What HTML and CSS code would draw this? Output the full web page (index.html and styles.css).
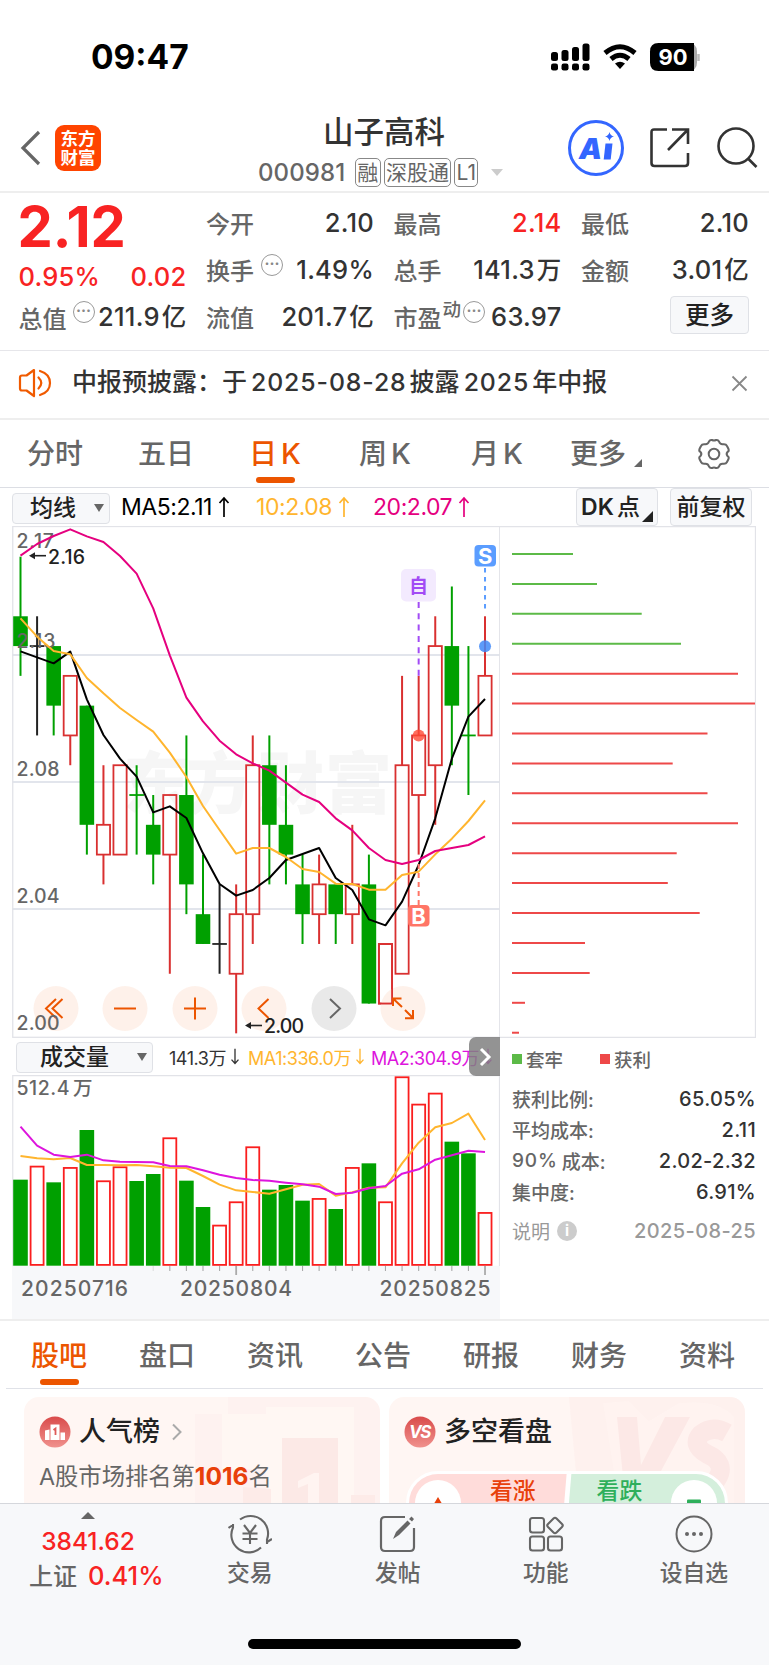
FILE: index.html
```html
<!DOCTYPE html>
<html lang="zh-CN">
<head>
<meta charset="UTF-8">
<meta name="viewport" content="width=device-width, initial-scale=1">
<title>山子高科 000981</title>
<link rel="stylesheet" href="styles.css">
</head>
<body>
<div class="phone">

  <div class="status-bar">
    <span class="clock">09:47</span>
    <svg class="status-icons" width="150" height="30" viewBox="0 0 150 30">
      <g>
        <rect x="1" y="10" width="7" height="9" rx="2.500"/><rect x="11.500" y="8" width="7" height="11" rx="2.500"/><rect x="22" y="5" width="7" height="14" rx="2.500"/><rect x="32.500" y="1.500" width="7" height="17.500" rx="2.500"/>
        <rect x="1" y="21.500" width="7" height="7" rx="2.200"/><rect x="11.500" y="21.500" width="7" height="7" rx="2.200"/><rect x="22" y="21.500" width="7" height="7" rx="2.200"/><rect x="32.500" y="21.500" width="7" height="7" rx="2.200"/>
      </g>
      <g fill="none" stroke="#000" stroke-width="5">
        <path d="M55 11 Q70 -1.500 85 11"/>
        <path d="M61 17 Q70 9.500 79 17"/>
      </g>
      <path d="M65 21.500 Q70 18 75 21.500 L70 27Z"/>
      <path d="M138 1 q9 0 9 8.500 v11 q0 8.500 -9 8.500z" fill="#aaa"/>
      <path d="M108.500 1 H144 V29 H108.500 Q100 29 100 20.500 V9.500 Q100 1 108.500 1Z"/>
      <path d="M148.500 12 v7" stroke="#bbb" stroke-width="2.500"/>
      <text x="123" y="23" class="battery-text" text-anchor="middle">90</text>
    </svg>
  </div>

  <div class="nav">
    <div class="nav-left">
      <svg width="22" height="36" viewBox="0 0 22 36"><path d="M19 2 L3 18 L19 34" fill="none" stroke="#666" stroke-width="3.200"/></svg>
      <div class="app-logo"><span>东方</span><span>财富</span></div>
    </div>
    <div class="nav-title">
      <h1>山子高科</h1>
      <div class="nav-sub">
        <span class="code">000981</span><span class="tag">融</span><span class="tag">深股通</span><span class="tag">L1</span><i class="caret-light"></i>
      </div>
    </div>
    <div class="nav-right">
      <svg width="58" height="58" viewBox="0 0 58 58">
        <circle cx="29" cy="29" r="26.500" fill="#fff" stroke="#3366ff" stroke-width="3"/>
        <text x="12" y="40" class="ai-text">A</text>
        <path d="M38.500 24.500 h7 l-1.800 16 h-7z" fill="#3366ff"/>
        <path d="M42.500 13 q.8 3.700 4.500 4.500 q-3.700 .8 -4.500 4.500 q-.8 -3.700 -4.500 -4.500 q3.700 -.8 4.500 -4.500z" fill="#3366ff"/>
      </svg>
      <svg width="42" height="42" viewBox="0 0 42 42" fill="none" stroke="#333" stroke-width="2.600">
        <path d="M18 2.500 H5 Q2.500 2.500 2.500 5 V36 Q2.500 39 5.500 39 H36 Q39 39 39 36 V26"/>
        <path d="M23 2.500 H39 V17 M39 2.500 L19 23"/>
      </svg>
      <svg width="44" height="42" viewBox="0 0 44 42" fill="none" stroke="#333" stroke-width="2.600">
        <circle cx="21" cy="19" r="17.500"/><path d="M33 31.500 L41.500 40"/>
      </svg>
    </div>
  </div>

  <div class="quote">
    <div class="quote-col first">
      <div class="price">2.12</div>
      <div class="row red"><b>0.95%</b><b>0.02</b></div>
      <div class="row"><span>总值<i class="dots">···</i></span><b>211.9<em>亿</em></b></div>
    </div>
    <div class="quote-col">
      <div class="row"><span>今开</span><b>2.10</b></div>
      <div class="row"><span>换手<i class="dots far">···</i></span><b>1.49%</b></div>
      <div class="row"><span>流值</span><b>201.7<em>亿</em></b></div>
    </div>
    <div class="quote-col">
      <div class="row"><span>最高</span><b class="red">2.14</b></div>
      <div class="row"><span>总手</span><b>141.3<em>万</em></b></div>
      <div class="row"><span>市盈<sup>动</sup><i class="dots near">···</i></span><b>63.97</b></div>
    </div>
    <div class="quote-col">
      <div class="row"><span>最低</span><b>2.10</b></div>
      <div class="row"><span>金额</span><b>3.01<em>亿</em></b></div>
      <div class="row end"><button class="more-btn">更多</button></div>
    </div>
  </div>

  <div class="notice">
    <svg width="34" height="30" viewBox="0 0 34 30" fill="none" stroke="#f05a00" stroke-width="2.200" stroke-linejoin="round">
      <path d="M16 2 L8.500 7.500 H4 Q2 7.500 2 9.500 V20.500 Q2 22.500 4 22.500 H8.500 L16 28Z"/>
      <path d="M20.500 9.500 Q26 15 20.500 20.500 M22 3 Q32 6 32 15 Q32 24 22 27" stroke-linecap="round"/>
    </svg>
    <p>中报预披露：于<span class="num">2025-08-28</span>披露<span class="num">2025</span>年中报</p>
    <svg width="17" height="17" viewBox="0 0 17 17"><path d="M1.500 1.500 L15.500 15.500 M15.500 1.500 L1.500 15.500" stroke="#888" stroke-width="1.800"/></svg>
  </div>

  <div class="period-tabs">
    <a>分时</a>
    <a>五日</a>
    <a class="active">日<span>K</span></a>
    <a class="week">周<span>K</span></a>
    <a class="month">月<span>K</span></a>
    <a class="with-corner">更多<i class="corner"></i></a>
    <svg width="34" height="34" viewBox="0 0 34 34" fill="none" stroke="#666" stroke-width="2">
      <path d="M12 4.500 Q13 2.500 15 3 Q17 4 19 3 Q21 2.500 22 4.500 Q23 7.500 26 7.200 Q29 6.800 30 9 L31.500 12 Q32.300 14 30.500 15 Q28.800 17 30.500 19 Q32.300 20 31.500 22 L30 25 Q29 27.200 26 26.800 Q23 26.500 22 29.500 Q21 31.500 19 31 Q17 30 15 31 Q13 31.500 12 29.500 Q11 26.500 8 26.800 Q5 27.200 4 25 L2.500 22 Q1.700 20 3.500 19 Q5.200 17 3.500 15 Q1.700 14 2.500 12 L4 9 Q5 6.800 8 7.200 Q11 7.500 12 4.500Z"/>
      <circle cx="17" cy="17" r="5.300"/>
    </svg>
  </div>

  <div class="ma-bar">
    <button class="select ma-select">均线<i class="caret"></i></button>
    <span class="ma ma5">MA5:2.11<svg class="arrow" viewBox="0 0 12 22"><path d="M6 21 V2 M1.500 7 L6 2 L10.500 7"/></svg></span>
    <span class="ma ma10">10:2.08<svg class="arrow" viewBox="0 0 12 22"><path d="M6 21 V2 M1.500 7 L6 2 L10.500 7"/></svg></span>
    <span class="ma ma20">20:2.07<svg class="arrow" viewBox="0 0 12 22"><path d="M6 21 V2 M1.500 7 L6 2 L10.500 7"/></svg></span>
    <button class="box dk">DK<span>点</span><i class="corner dark"></i></button>
    <button class="box">前复权</button>
  </div>

  <div class="charts">
    <div class="chart-left">
      <svg id="kline" width="488" height="512" viewBox="12 526 488 512"></svg>
      <div class="vol-bar">
        <button class="select vol-select">成交量<i class="caret"></i></button>
        <span class="v0">141.3万<svg class="arrow small" viewBox="0 0 12 22"><path d="M6 1 V20 M1.500 15 L6 20 L10.500 15"/></svg></span>
        <span class="v1">MA1:336.0万<svg class="arrow small" viewBox="0 0 12 22"><path d="M6 1 V20 M1.500 15 L6 20 L10.500 15"/></svg></span>
        <span class="v2">MA2:304.9万<svg class="arrow small" viewBox="0 0 12 22"><path d="M6 1 V20 M1.500 15 L6 20 L10.500 15"/></svg></span>
        <div class="vol-next"><svg width="14" height="20" viewBox="0 0 14 20"><path d="M3 2 L11 10 L3 18" fill="none" stroke="#fff" stroke-width="3"/></svg></div>
      </div>
      <svg id="volume" width="488" height="244" viewBox="12 1075 488 244"></svg>
    </div>
    <div class="chart-right">
      <svg id="chips" width="256" height="512" viewBox="500 526 256 512"></svg>
      <div class="legend"><i class="sq green"></i><span>套牢</span><i class="sq redsq"></i><span>获利</span></div>
      <div class="stat"><span>获利比例:</span><b>65.05%</b></div>
      <div class="stat"><span>平均成本:</span><b>2.11</b></div>
      <div class="stat"><span><u>90%</u>成本:</span><b>2.02-2.32</b></div>
      <div class="stat"><span>集中度:</span><b>6.91%</b></div>
      <div class="stat muted"><span>说明<i class="info">i</i></span><b>2025-08-25</b></div>
    </div>
  </div>

  <div class="info-tabs">
    <a class="active">股吧</a><a>盘口</a><a>资讯</a><a>公告</a><a>研报</a><a>财务</a><a>资料</a>
  </div>

  <div class="feed">
    <div class="card">
      <svg class="card-bg" width="356" height="107" viewBox="0 0 356 107">
        <path d="M171 17 H204 V0 H356 V107 H171Z" fill="#feefec" opacity=".55"/>
        <path d="M198 72 V17 H242 V10 H330 V107 H242 V72Z" fill="#fff7f4" opacity=".8"/>
        <path d="M258 41 H314 V107 H258Z" fill="#fce9e6"/><path d="M219 90 L247 92 V107 H219Z M327 98 H351 V107 H327Z" fill="#fdebe8"/>
        <path d="M274 84 L290 76 H295 V107 H284 V87 L274 91Z" fill="#fff4f1"/>
      </svg>
      <div class="card-head">
        <svg width="32" height="32" viewBox="0 0 32 32">
          <defs><linearGradient id="badge" x1="0" y1="0" x2="0" y2="1"><stop offset="0" stop-color="#d94b4b"/><stop offset="1" stop-color="#f0918d"/></linearGradient></defs>
          <circle cx="16" cy="16" r="15.500" fill="url(#badge)"/>
          <path d="M6 24 V14.500 L10.500 13.500 V24Z M11.500 24 V8.500 H20.500 V24Z M21.500 24 V16.500 H26 V24Z" fill="#fff"/>
          <path d="M14.500 14 L16.500 12.500 V19" fill="none" stroke="#de5b59" stroke-width="1.800"/>
        </svg>
        <h2>人气榜</h2>
        <svg class="chev" width="12" height="18" viewBox="0 0 12 18"><path d="M2 1.500 L9.500 9 L2 16.500" fill="none" stroke="#aaa" stroke-width="2"/></svg>
      </div>
      <p class="rank">A股市场排名第<b>1016</b>名</p>
    </div>
    <div class="card">
      <svg class="card-bg" width="356" height="107" viewBox="0 0 356 107">
        <path d="M180 0 H340 Q356 0 356 16 V107 H190Z" fill="#feefec" opacity=".75"/>
        <path d="M214 6 L240 4 L260 24 L290 6 Q330 2 345 20 V107 H230Z" fill="#fff4f1" opacity=".65"/>
        <path d="M228 20 H248 L252 68 L276 20 H301 L258 100 H236Z" fill="#fce8e6"/>
        <path d="M338 36 Q324 28 312 37 Q302 48 318 57 Q338 66 328 82 Q318 96 294 88" fill="none" stroke="#fce8e6" stroke-width="19"/>
      </svg>
      <div class="card-head">
        <svg width="32" height="32" viewBox="0 0 32 32"><circle cx="16" cy="16" r="15.500" fill="url(#badge)"/><text x="15.500" y="22" text-anchor="middle" class="vs">VS</text></svg>
        <h2>多空看盘</h2>
      </div>
      <div class="vote">
        <div class="vote-up"><i><svg width="14" height="10" viewBox="0 0 14 10"><path d="M7 0 L13 10 H1Z" fill="#e8400a"/></svg></i>看涨</div>
        <div class="vote-down">看跌<i><svg width="14" height="10" viewBox="0 0 14 10"><rect y="2.500" width="14" height="5" rx="1" fill="#2eaf5b"/></svg></i></div>
      </div>
    </div>
  </div>

  <div class="bottom-bar">
    <div class="index">
      <i class="up-caret"></i>
      <b>3841.62</b>
      <div>上证<b>0.41%</b></div>
    </div>
    <div class="tool">
      <svg width="44" height="40" viewBox="0 0 44 40" fill="none" stroke="#666" stroke-width="2.100">
        <path d="M12 5.500 A17.500 17.500 0 0 1 39 25.500 V30 M39 28 L44 25 M33 33.500 A17.500 17.500 0 0 1 5 13.500 V10 M5 11 L0.500 14"/>
        <path d="M16 11 L22 19 L28 11 M22 19 V30 M14.500 19.500 H29.500 M14.500 25 H29.500"/>
      </svg>
      <span>交易</span>
    </div>
    <div class="tool">
      <svg width="44" height="40" viewBox="0 0 44 40" fill="none" stroke="#666" stroke-width="2.200">
        <path d="M29 3 H9 Q5 3 5 7 V33 Q5 37 9 37 H34 Q38 37 38 33 V14"/>
        <path d="M17 25 L20 18 L31.500 6.500 L34.500 9.500 L23 21Z M33 5 L35.500 2.500 L38 5 L36 7.500Z" fill="#666" stroke="none"/>
      </svg>
      <span>发帖</span>
    </div>
    <div class="tool">
      <svg width="44" height="40" viewBox="0 0 44 40" fill="none" stroke="#666" stroke-width="2.100">
        <rect x="6" y="4" width="14" height="14.500" rx="2.500"/><rect x="6" y="22.500" width="14" height="14" rx="2.500"/><rect x="24" y="22.500" width="14" height="14" rx="2.500"/>
        <path d="M29.500 4.500 Q31 3 32.500 4.500 L38 10 Q39.500 11.500 38 13 L32.500 18.500 Q31 20 29.500 18.500 L24 13 Q22.500 11.500 24 10Z"/>
      </svg>
      <span>功能</span>
    </div>
    <div class="tool">
      <svg width="44" height="40" viewBox="0 0 44 40">
        <circle cx="22" cy="20" r="17.500" fill="none" stroke="#666" stroke-width="2"/>
        <g fill="#666"><circle cx="15" cy="20" r="2"/><circle cx="22" cy="20" r="2"/><circle cx="29" cy="20" r="2"/></g>
      </svg>
      <span>设自选</span>
    </div>
    <div class="home-line"></div>
  </div>

</div>
<script src="script.js"></script>
</body>
</html>
```
FILE: styles.css
```css
* {
  box-sizing: border-box;
}
body {
  margin: 0;
  background: #fff;
  color: #333;
  font-family: Inter, "Noto Sans CJK SC", sans-serif;
}
h1, h2, p {
  margin: 0;
  font-weight: 500;
}
b { font-weight: 500; }
i, em { font-style: normal; }
button {
  font-family: inherit;
  color: #222;
  padding: 0;
  background: #f7f8fa;
  border: 1.5px solid #dfe1e6;
  border-radius: 4px;
  line-height: 1;
}
svg { display: block; flex: none; }
.red { color: #f82323; }
.phone {
  width: 769px;
  height: 1665px;
  overflow: hidden;
  display: flex;
  flex-direction: column;
}
.phone > div { flex: none; }

/* status bar + nav */
.status-bar {
  height: 104px;
  padding: 42px 69px 0 91px;
  display: flex;
  justify-content: space-between;
}
.clock {
  font-size: 33.5px;
  font-weight: 700;
  line-height: 31px;
  color: #000;
}
.battery-text {
  font: 700 22px Inter, sans-serif;
  fill: #fff;
}
.nav {
  height: 89px;
  border-bottom: 2px solid #eee;
  display: flex;
  padding: 0 10px 0 20px;
}
.nav-left {
  display: flex;
  align-items: center;
  gap: 13px;
  width: 230px;
}
.app-logo {
  width: 46px;
  height: 46px;
  border-radius: 9px;
  background: #ff4400;
  color: #fff;
  font: 700 17.5px/20px "Noto Sans CJK SC", sans-serif;
  text-align: center;
  padding-top: 3px;
}
.app-logo span {
  display: block;
  height: 19px;
  line-height: 19px;
}
.nav-title {
  width: 270px;
  padding-top: 9px;
}
.nav-title h1 {
  font-size: 30.5px;
  line-height: 38px;
  padding-left: 73px;
  white-space: nowrap;
}
.nav-sub {
  display: flex;
  align-items: center;
  padding-left: 8px;
  margin-top: 7px;
  color: #666;
}
.code {
  font-size: 24px;
  font-weight: 500;
  letter-spacing: 0.1px;
  width: 97px;
}
.tag {
  font-size: 21px;
  line-height: 27px;
  height: 29px;
  border: 1.5px solid #888;
  border-radius: 5px;
  margin-right: 3px;
  padding: 0 1.3px;
  flex: none;
}
.caret-light {
  border: 6.5px solid transparent;
  border-top: 7px solid #ccc;
  border-bottom: 0;
  margin-left: 10px;
  flex: none;
}
.nav-right {
  display: flex;
  align-items: center;
  gap: 24px;
  margin: 1px 0 0 auto;
}
.ai-text {
  font: italic 900 29px Inter, sans-serif;
  fill: #3366ff;
}

/* quote */
.quote {
  height: 158px;
  border-bottom: 1.5px solid #e6e6ea;
  display: grid;
  grid-template-columns: repeat(4, 168px);
  column-gap: 19.5px;
  padding: 6px 0 0 18.5px;
}
.row {
  height: 47px;
  display: flex;
  align-items: center;
  justify-content: space-between;
  white-space: nowrap;
}
.row span {
  font-size: 24px;
  font-weight: 500;
  color: #666;
  display: flex;
  align-items: center;
}
.row b {
  font-size: 25.5px;
  line-height: 30px;
  letter-spacing: 0.25px;
}
.row em { margin-left: 2px; font-size: 24.5px; }
.row.end { justify-content: flex-end; }
.price {
  font-size: 56px;
  font-weight: 700;
  color: #f82323;
  line-height: 56px;
  height: 52px;
  margin-left: -1px;
}
.first .row.red { height: 52px; }
.first .row:last-child { height: 28px; }
.dots {
  width: 22px;
  height: 22px;
  border: 1.5px solid #999;
  border-radius: 50%;
  color: #888;
  font-size: 15px;
  font-weight: 700;
  line-height: 18px;
  text-align: center;
  margin: -10px 0 0 6px;
}
.far { margin-left: 7px; }
.near { margin-left: 2px; }
.row sup {
  font-size: 18.5px;
  line-height: 18px;
  margin: -16px 0 0 1px;
}
.more-btn {
  width: 79px;
  height: 38px;
  font-size: 24.5px;
  font-weight: 500;
  margin-top: -3px;
}

/* notice */
.notice {
  height: 69px;
  border-bottom: 2px solid #eee;
  display: flex;
  align-items: center;
  padding: 0 21px 3px 18px;
}
.notice p {
  flex: 1;
  font-size: 25px;
  line-height: 34px;
  margin-top: -2px;
  padding-left: 20px;
}
.num { margin: 0 3px 0 4px; letter-spacing: 0.9px; font-size: 24.8px; }

/* period tabs */
.period-tabs {
  height: 68px;
  border-bottom: 1.5px solid #dcdee4;
  display: flex;
  align-items: center;
  padding: 0 38px 0 27px;
  justify-content: space-between;
  font-size: 28px;
  font-weight: 500;
  color: #666;
}
.period-tabs a {
  position: relative;
  line-height: 66px;
}
.period-tabs span { margin-left: 4px; font-size: 29px; }
.week { margin: 0 -3px 0 3px; }
.month { margin: 0 -8px 0 8px; }
.period-tabs .active, .info-tabs .active { color: #ec5500; }
.active::after {
  content: "";
  position: absolute;
  left: 50%;
  bottom: 4px;
  width: 39px;
  height: 6px;
  margin-left: -19px;
  border-radius: 3px;
  background: #ec5500;
}
.with-corner { padding-right: 16px; }
.corner {
  position: absolute;
  right: 0;
  bottom: 20px;
  border-left: 8px solid transparent;
  border-bottom: 8px solid #666;
}
.corner.dark {
  right: 4px;
  bottom: 3px;
  border-left-width: 11px;
  border-bottom: 11px solid #222;
}

/* indicator bar */
.ma-bar {
  height: 38px;
  display: flex;
  align-items: center;
  padding: 0 16px 0 12px;
}
.select {
  display: flex;
  align-items: center;
  justify-content: space-between;
  font-weight: 500;
}
.caret {
  border: 5px solid transparent;
  border-top: 8px solid #666;
  border-bottom: 0;
}
.ma-select {
  width: 98px;
  height: 31px;
  margin-top: 2px;
  font-size: 23px;
  padding: 0 5px 0 17px;
}
.ma {
  font-size: 23px;
  letter-spacing: -0.45px;
  display: flex;
  align-items: center;
  white-space: nowrap;
}
.ma5 { color: #000; margin-left: 11px; width: 135px; }
.ma10 { color: #ffb52e; width: 117px; }
.ma20 { color: #e5007f; width: 203px; }
.arrow {
  width: 12px;
  height: 22px;
  fill: none;
  stroke: currentColor;
  stroke-width: 1.7;
  margin-left: 6px;
}
.arrow.small { width: 10px; height: 17px; margin-left: 4px; }
.box {
  position: relative;
  height: 38px;
  width: 82px;
  font-size: 23px;
  font-weight: 500;
  white-space: nowrap;
  flex: none;
}
.dk { margin-right: 12px; font-weight: 600; padding-right: 13px; }
.dk span { margin-left: 3px; font-weight: 500; }

/* charts */
.charts {
  display: flex;
  height: 795px;
  border-bottom: 2px solid #eee;
  padding-left: 12px;
}
.chart-left { width: 488px; }
.chart-right { width: 256px; }
.vol-bar {
  position: relative;
  height: 37px;
  display: flex;
  align-items: center;
  font-size: 18px;
  letter-spacing: -0.45px;
  white-space: nowrap;
}
.vol-bar span { display: flex; align-items: center; }
.vol-select {
  width: 137px;
  height: 31px;
  margin: 1px 0 0 4px;
  font-size: 23px;
  padding: 0 5px 0 23px;
}
.v0 { margin-left: 16px; width: 79px; }
.v1 { color: #ffb52e; width: 123px; }
.v2 { color: #dd15dd; }
.vol-next {
  position: absolute;
  right: 0;
  top: -1px;
  width: 31px;
  height: 39px;
  background: rgba(128, 128, 128, 0.85);
  border-radius: 7px 0 0 7px;
  display: flex;
  align-items: center;
  justify-content: center;
}
.axis-text {
  font: 500 19.5px Inter, "Noto Sans CJK SC", sans-serif;
  fill: #666;
}
.date { font-size: 21px; }
.note-text {
  font: 500 19.5px Inter, sans-serif;
  fill: #222;
}
.mark-text {
  font: 700 22px Inter, sans-serif;
  fill: #fff;
}
.self-text {
  font: 700 19px "Noto Sans CJK SC", sans-serif;
  fill: #a24bf5;
}
.watermark {
  font: 900 67px "Noto Sans CJK SC", sans-serif;
  fill: #f6f6f6;
}

.legend {
  display: flex;
  align-items: center;
  height: 41px;
  padding-left: 12px;
  font-size: 18.5px;
  font-weight: 500;
  color: #666;
}
.legend span { width: 73px; margin-left: 4px; }
.sq { width: 10px; height: 10px; }
.green { background: #5cba47; }
.redsq { background: #ee4848; margin-left: 1px; }
.stat {
  display: flex;
  justify-content: space-between;
  align-items: center;
  height: 31px;
  padding: 0 0 0 12px;
  font-size: 19px;
}
.legend + .stat { margin-top: 4px; }
.stat span { color: #666; display: flex; align-items: center; font-weight: 500; }
.stat b { letter-spacing: 0.3px; font-size: 20px; }
.stat u { text-decoration: none; margin-right: 4px; letter-spacing: 0.9px; }
.muted { margin-top: 8px; }
.stat.muted span { color: #999; font-weight: 400; }
.muted b { color: #999; letter-spacing: 0.4px; }
.info {
  width: 20px;
  height: 20px;
  background: #ccc;
  border-radius: 50%;
  color: #fff;
  font-size: 15px;
  font-weight: 700;
  line-height: 20px;
  text-align: center;
  margin-left: 7px;
}

/* info tabs */
.info-tabs {
  height: 68px;
  margin: 0 6px;
  border-bottom: 1.5px solid #e0e2e8;
  display: flex;
  justify-content: space-between;
  padding: 0 28px 0 25px;
  font-size: 28px;
  font-weight: 500;
  line-height: 70px;
  color: #666;
}
.info-tabs a { position: relative; height: 68px; }

/* cards */
.feed {
  height: 114px;
  overflow: hidden;
  display: flex;
  gap: 9px;
  padding: 8px 24px 0;
}
.card {
  position: relative;
  width: 356px;
  height: 130px;
  border-radius: 15px;
  background: #fff6f3;
  overflow: hidden;
  flex: none;
}
.card-bg {
  position: absolute;
  left: 0;
  top: 0;
}
.card-head {
  position: relative;
  display: flex;
  align-items: center;
  height: 40px;
  margin-top: 15px;
  padding-left: 15px;
}
.card-head h2 {
  font-size: 27px;
  line-height: 40px;
  margin-left: 8px;
  color: #222;
}
.chev { margin-left: 11px; }
.vs {
  font: italic 700 17px Inter, sans-serif;
  letter-spacing: -1.5px;
  fill: #fff;
}
.rank {
  position: relative;
  font-size: 23.3px;
  line-height: 34px;
  margin-top: 7px;
  padding-left: 15px;
  font-weight: 400;
  color: #666;
}
.rank b { color: #e8400a; font-weight: 700; font-size: 24.5px; }
.vote {
  position: relative;
  display: flex;
  width: 322px;
  height: 64px;
  margin: 19px 0 0 17px;
  border: 3px solid #fff;
  border-radius: 32px;
  overflow: hidden;
  font-size: 22.8px;
  font-weight: 500;
  line-height: 33px;
  background: #fff;
}
.vote i {
  width: 46px;
  height: 46px;
  border-radius: 50%;
  background: #fff;
  display: flex;
  align-items: flex-start;
  justify-content: center;
  padding-top: 17px;
  margin-top: 6px;
  flex: none;
}
.vote-up, .vote-down {
  width: 163px;
  display: flex;
  color: #e8400a;
  background: #ffdcda;
}
.vote-up {
  clip-path: polygon(0 0, 100% 0, 97% 100%, 0 100%);
  padding-left: 6px;
}
.vote-up i { margin-right: 29px; }
.vote-down {
  color: #2eaf5b;
  background: #d4efdc;
  clip-path: polygon(3% 0, 100% 0, 100% 100%, 0 100%);
  padding-left: 30px;
}
.vote-down i { margin-left: 29px; }

/* bottom bar */
.bottom-bar {
  position: relative;
  height: 162px;
  background: #f7f8fa;
  border-top: 1.5px solid #d5d7dc;
  display: flex;
  color: #666;
}
.index {
  width: 176px;
  display: flex;
  flex-direction: column;
  align-items: center;
  font-size: 24px;
  font-weight: 500;
  padding-top: 8px;
}
.up-caret {
  border: 7px solid transparent;
  border-bottom: 7px solid #666;
  border-top: 0;
}
.index b {
  color: #f82323;
  font-size: 24.5px;
  line-height: 34px;
  margin-top: 5px;
}
.index div {
  width: 176px;
  margin-top: 1px;
  padding-left: 29px;
  line-height: 34px;
  white-space: nowrap;
}
.index div b { margin-left: 11px; font-size: 25.5px; }
.tool {
  width: 148.3px;
  display: flex;
  flex-direction: column;
  align-items: center;
  margin-left: -0.3px;
  padding-top: 10px;
  font-size: 22.8px;
  font-weight: 500;
}
.tool span { line-height: 34px; margin-top: 2px; }
.home-line {
  position: absolute;
  left: 248px;
  bottom: 16px;
  width: 273px;
  height: 10px;
  border-radius: 5px;
  background: #000;
}
```
FILE: script.js
```javascript
const STEP = 16.59;
const X0 = 20.5;
const GREEN = '#00a000';
const RED = '#d93030';

const cx = i => X0 + i * STEP;
const py = k => 556.7 + k * 29.79; // k = cents below 2.16
const line = (x1, y1, x2, y2, c, w = 1.6, extra = '') =>
  `<line x1="${x1}" y1="${y1}" x2="${x2}" y2="${y2}" stroke="${c}" stroke-width="${w}" ${extra}/>`;
const poly = (ys, off, c) =>
  `<polyline fill="none" stroke="${c}" stroke-width="2" stroke-linejoin="round" points="${ys.map((y, i) => cx(i) + ',' + (off + y / 3)).join(' ')}"/>`;
const text = (x, y, s, cls, len) =>
  `<text x="${x}" y="${y}" class="${cls}"${len ? ` textLength="${len}"` : ''}>${s}</text>`;

// [color, high, top, bottom, low]
const candles = [
  ['g', 0, 2, 3, 4], ['k', 2, 3, 3, 6], ['g', 3, 3, 5, 6], ['r', 4, 4, 6, 7], ['g', 5, 5, 9, 10],
  ['r', 7, 9, 10, 11], ['r', 7, 7, 10, 10], ['g', 7, 8, 8, 10], ['g', 8, 9, 10, 11], ['r', 8, 8, 10, 14],
  ['g', 6, 8, 11, 12], ['g', 10, 12, 13, 13], ['k', 11, 13, 13, 14], ['r', 11, 12, 14, 16], ['r', 6, 7, 12, 13],
  ['g', 6, 7, 9, 11], ['g', 7, 9, 10, 11], ['g', 10, 11, 12, 13], ['r', 10, 11, 12, 13], ['g', 11, 11, 12, 13],
  ['r', 9, 11, 12, 13], ['g', 10, 11, 15, 15], ['r', 13, 13, 15, 15], ['r', 4, 7, 14, 14], ['r', 4, 6, 8, 10],
  ['r', 2, 3, 7, 9], ['g', 1, 3, 5, 7], ['g', 3, 6, 6, 8], ['r', 2, 4, 6, 6]
];
const ma5 = [394,412,430,395,538,645,716,770,877,859,894,1000,1092,1127,1110,1074,1020,1002,984,1074,1110,1198,1216,1145,1035,895,716,590,537];
const ma10 = [295,350,393,403,474,520,564,600,635,698,771,858,930,1001,984,984,1011,1047,1056,1091,1092,1109,1109,1065,1055,1003,956,903,841];
const ma20 = [107,72,48,28,49,66,108,161,265,406,533,604,662,703,730,752,788,824,846,895,931,984,1020,1032,1020,993,984,975,949];

function drawKline() {
  let s = '';
  s += text(123, 808, '东方', 'watermark', 130) + text(257, 808, '财富', 'watermark', 135);
  [655, 782, 909].forEach(y => { s += line(12, y, 500, y, '#e2e5ec', 1.8); });
  s += '<rect x="12.75" y="526.5" width="487" height="510.8" fill="none" stroke="#e2e3e8" stroke-width="1.3"/>';
  candles.forEach(([c, h, t, b, l], i) => {
    const x = cx(i);
    const col = c === 'g' ? GREEN : c === 'r' ? RED : '#222';
    if (c === 'r') {
      if (h < t) s += line(x, py(h), x, py(t), col, 2);
      if (l > b) s += line(x, py(b), x, py(l), col, 2);
      s += `<rect x="${x - 6.6}" y="${py(t)}" width="13.2" height="${py(b) - py(t)}" fill="none" stroke="${col}" stroke-width="1.8"/>`;
    } else {
      s += line(x, py(h), x, py(l), col, 2);
      if (t === b) s += line(x - 7.3, py(t), x + 7.3, py(t), col, 1.8);
      else s += `<rect x="${x - 7.3}" y="${py(t)}" width="14.6" height="${py(b) - py(t)}" fill="${col}"/>`;
    }
  });

  // round buttons
  [56, 125, 195, 264, 334, 403].forEach((x, i) => {
    s += `<circle cx="${x}" cy="1008.5" r="22.5" fill="${i === 4 ? '#e4e4e4' : '#feeee5'}" fill-opacity=".82"/>`;
  });
  // the last candles stay visible over the fullscreen button
  s += `<rect x="${cx(22) - 6.6}" y="${py(13)}" width="13.2" height="${py(15) - py(13)}" fill="none" stroke="${RED}" stroke-width="1.8"/>`;
  s += '<g fill="none" stroke="#ec5500" stroke-width="2">'
    + '<path d="M56 999 L46 1008.500 L56 1018 M62.500 999 L52.500 1008.500 L62.500 1018"/>'
    + '<path d="M114 1008.500 H136 M184 1008.500 H206 M195 997.500 V1019.500"/>'
    + '<path d="M268.500 999 L258.500 1008.500 L268.500 1018"/>'
    + '<path d="M402 1007 L393 998.500 M393 1006 V998.500 H401.500 M405 1010 L413 1018 M413 1010 V1018.200 H405"/></g>'
    + '<path d="M330 999 L340 1008.500 L330 1018" fill="none" stroke="#666" stroke-width="2"/>';

  s += text(16.5, 548, '2.17', 'axis-text', 37.5) + text(16.5, 648, '2.13', 'axis-text', 39)
    + text(16.5, 776, '2.08', 'axis-text', 43) + text(16.5, 903, '2.04', 'axis-text', 43)
    + text(16.5, 1030, '2.00', 'axis-text', 43);

  s += poly(ma5, 520, '#000') + poly(ma10, 520, '#ffb52e') + poly(ma20, 520, '#e5007f');

  // high / low notes
  s += line(33, 555.7, 46, 555.7, '#222') + '<path d="M29 555.700 l6 -3.500 v7z" fill="#222"/>' + text(48, 563.5, '2.16', 'note-text', 37);
  s += line(249, 1025.5, 262, 1025.5, '#222') + '<path d="M245 1025.500 l6 -3.500 v7z" fill="#222"/>' + text(264, 1032.5, '2.00', 'note-text', 40);

  // trade marks
  s += line(cx(24), 602, cx(24), 676, '#a24bf5', 2, 'stroke-dasharray="6 5.3"')
    + '<rect x="401" y="569" width="35" height="32.500" rx="5" fill="#f3eafe"/>' + text(409, 593, '自', 'self-text')
    + `<circle cx="${cx(24)}" cy="735.500" r="6" fill="#ff4a36" fill-opacity=".8"/>`
    + line(cx(24), 864, cx(24), 905, '#ff7566', 2, 'stroke-dasharray="5 4"')
    + '<rect x="408" y="905" width="21.500" height="21.500" rx="4" fill="#ff7566"/>' + text(411.3, 923.7, 'B', 'mark-text')
    + line(cx(28), 568, cx(28), 610, '#5b9dff', 2, 'stroke-dasharray="4.5 4.5"')
    + '<rect x="474.500" y="545" width="21.500" height="21.500" rx="4" fill="#5b9dff"/>' + text(478, 563.8, 'S', 'mark-text')
    + `<circle cx="${cx(28)}" cy="646.300" r="6" fill="#418af8" fill-opacity=".85"/>`;
  document.getElementById('kline').innerHTML = s;
}

const vols = '449g 408r 457g 412r 300g 452r 410r 453g 432g 323r 452g 531g 585r 515r 350r 479g 465g 512g 505r 537g 412r 400g 515r 140r 222r 189r 335g 370g 547r'.split(' ');
const vma1 = [378,385,388,384,405,405,406,405,409,413,414,438,464,481,486,491,478,464,462,497,487,473,472,400,338,292,279,251,330];
const vma2 = [290,347,374,381,374,391,395,396,397,408,409,421,434,444,450,452,458,463,470,492,488,475,468,431,418,389,376,362,366];

function drawVolume() {
  const base = 1265.7;
  let s = '<rect x="12" y="1265.700" width="488" height="54" fill="#f7f8fa"/>';
  s += '<path d="M12.750 1266 V1075.600 H499.500 V1266" fill="none" stroke="#e2e3e8" stroke-width="1.200"/>';
  vols.forEach((v, i) => {
    const y = 1030 + parseInt(v) / 3;
    if (v.endsWith('g')) s += `<rect x="${cx(i) - 7.3}" y="${y}" width="14.6" height="${base - y}" fill="${GREEN}"/>`;
    else s += `<rect x="${cx(i) - 6.5}" y="${y + 0.6}" width="13" height="${base - y - 1.4}" fill="none" stroke="#fa1e1e" stroke-width="1.8"/>`;
    if (i >= 8) {
      const big = i === 13 || i === 28;
      s += line(cx(i), 1266, cx(i), big ? 1275 : 1271, i === 8 ? '#ddd' : '#aaa', big ? 1.8 : 1.1);
    }
  });
  s += poly(vma1, 1030, '#ffb52e') + poly(vma2, 1030, '#dd15dd');
  s += text(16.5, 1095, '512.4', 'axis-text', 53) + text(73, 1095, '万', 'axis-text', 18);
  s += text(21, 1296, '20250716', 'axis-text date', 107) + text(180, 1296, '20250804', 'axis-text date', 112)
    + text(379.5, 1296, '20250825', 'axis-text date', 111);
  document.getElementById('volume').innerHTML = s;
}

const chips = [573, 597, 641.7, 681, 738, 755, 707.5, 672.7, 707.5, 738, 676.7, 667.8, 699.7, 585, 589.7, 525, 519];

function drawChips() {
  let s = '<path d="M500 526.500 H755.500 V1037.300 H500" fill="none" stroke="#e2e3e8" stroke-width="1.300"/>';
  chips.forEach((x, i) => {
    s += line(512, 554 + i * 29.92, x, 554 + i * 29.92, i < 4 ? '#5cba47' : '#ee4848', 2);
  });
  document.getElementById('chips').innerHTML = s;
}

drawKline();
drawVolume();
drawChips();
```
